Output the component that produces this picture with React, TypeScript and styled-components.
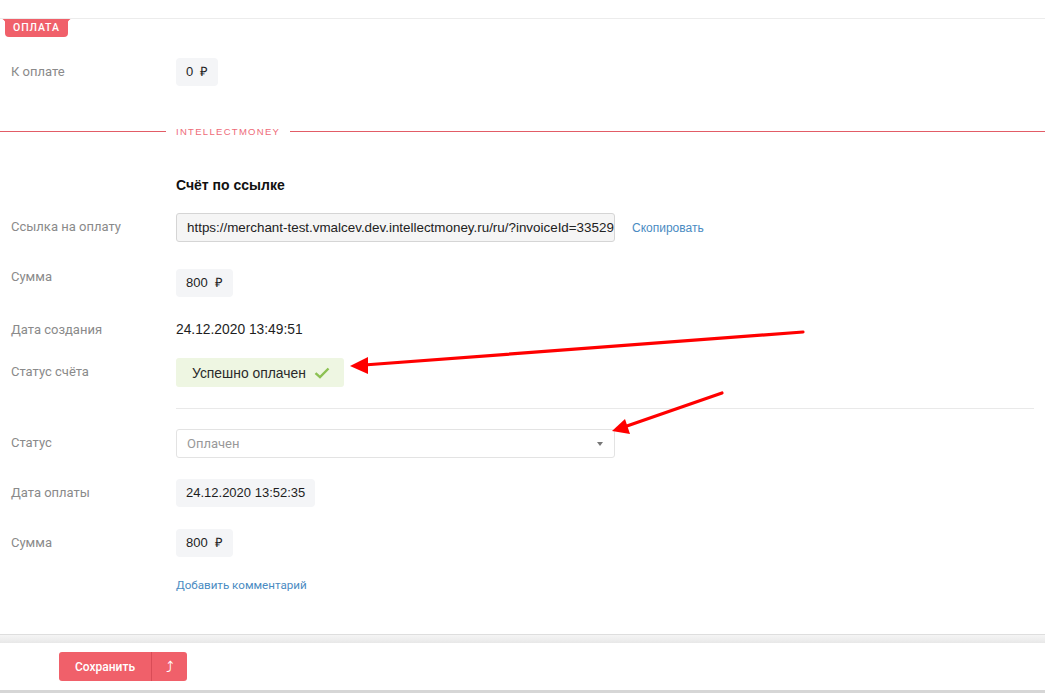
import styled, { createGlobalStyle } from "styled-components";

const GlobalStyle = createGlobalStyle`
  html, body {
    margin: 0;
    padding: 0;
    background: #fff;
  }
  body {
    font-family: "Liberation Sans", Arial, sans-serif;
    color: #222;
  }
`;

type Row = { label: string; top: number; tight?: boolean; content: React.ReactNode };

const invoiceUrl = "https://merchant-test.vmalcev.dev.intellectmoney.ru/ru/?invoiceId=3352911";

export default function App() {
  const invoiceRows: Row[] = [
    {
      label: "Ссылка на оплату",
      top: 18,
      content: (
        <LinkLine>
          <LinkInput readOnly value={invoiceUrl} />
          <Action>Скопировать</Action>
        </LinkLine>
      ),
    },
    { label: "Сумма", top: 27, tight: true, content: <Chip>800 &nbsp;₽</Chip> },
    { label: "Дата создания", top: 19, content: <PlainValue>24.12.2020 13:49:51</PlainValue> },
    {
      label: "Статус счёта",
      top: 14,
      content: (
        <StatusChip>
          Успешно оплачен
          <svg width="16" height="12" viewBox="0 0 16 12">
            <path d="M1.5 6.2 L6 10.2 L14.5 1.5" fill="none" stroke="#8cc152" strokeWidth="2.4" />
          </svg>
        </StatusChip>
      ),
    },
  ];

  const paymentRows: Row[] = [
    {
      label: "Статус",
      top: 20,
      content: (
        <Select>
          <span>Оплачен</span>
          <Caret />
        </Select>
      ),
    },
    { label: "Дата оплаты", top: 21, content: <Chip>24.12.2020 13:52:35</Chip> },
    { label: "Сумма", top: 22, content: <Chip>800 &nbsp;₽</Chip> },
  ];

  return (
    <Page>
      <GlobalStyle />
      <Content>
        <TopBar />
        <Badge>ОПЛАТА</Badge>
        <Field $top={21}>
          <Label>К оплате</Label>
          <Chip>0 &nbsp;₽</Chip>
        </Field>
        <Divider>
          <span>INTELLECTMONEY</span>
        </Divider>
        <SectionTitle>Счёт по ссылке</SectionTitle>
        {invoiceRows.map((r, i) => (
          <Field key={i} $top={r.top}>
            <Label $tight={r.tight}>{r.label}</Label>
            {r.content}
          </Field>
        ))}
        <Separator />
        {paymentRows.map((r, i) => (
          <Field key={i} $top={r.top}>
            <Label>{r.label}</Label>
            {r.content}
          </Field>
        ))}
        <CommentLink>Добавить комментарий</CommentLink>
      </Content>
      <FooterShade />
      <Footer>
        <SaveGroup>
          <SaveButton>Сохранить</SaveButton>
          <ArrowButton>⤴</ArrowButton>
        </SaveGroup>
      </Footer>
      <Annotations width="1045" height="693" viewBox="0 0 1045 693">
        <line x1="803" y1="332" x2="364" y2="365" stroke="#ff0000" strokeWidth="3.2" strokeLinecap="round" />
        <polygon points="350,366 368,357 368,374" fill="#ff0000" />
        <line x1="722" y1="393" x2="624" y2="427" stroke="#ff0000" strokeWidth="3.2" strokeLinecap="round" />
        <polygon points="612,431 625,419 630,434" fill="#ff0000" />
      </Annotations>
    </Page>
  );
}

const Page = styled.div`
  position: relative;
  height: 100vh;
  display: flex;
  flex-direction: column;
  overflow: hidden;
`;

const Content = styled.div`
  flex: 1;
  display: flex;
  flex-direction: column;
`;

const TopBar = styled.div`
  height: 18px;
  border-bottom: 1px solid #ececec;
`;

const Badge = styled.div`
  position: relative;
  align-self: flex-start;
  margin-left: 5px;
  height: 18px;
  padding: 0 8px;
  background: #f0606a;
  color: #fff;
  font-family: Roboto, sans-serif;
  font-size: 10.5px;
  font-weight: 500;
  letter-spacing: 0.9px;
  line-height: 18px;
  border-radius: 0 0 4px 4px;
  &::before,
  &::after {
    content: "";
    position: absolute;
    top: 0;
    width: 3px;
    height: 3px;
    background: radial-gradient(circle at var(--cx) 100%, transparent 2.5px, #f0606a 3px);
  }
  &::before {
    left: -3px;
    --cx: 0%;
  }
  &::after {
    right: -3px;
    --cx: 100%;
  }
`;

const Field = styled.div<{ $top: number }>`
  margin-top: ${(p) => p.$top}px;
  display: grid;
  grid-template-columns: 176px 1fr;
  align-items: start;
`;

const Label = styled.div<{ $tight?: boolean }>`
  padding-left: 11px;
  font-family: Roboto, sans-serif;
  font-size: 13px;
  color: #8a8a8a;
  line-height: ${(p) => (p.$tight ? "16px" : "28px")};
`;

const Chip = styled.div`
  justify-self: start;
  height: 28px;
  padding: 0 10px;
  border-radius: 4px;
  background: #f4f5f7;
  font-size: 13px;
  line-height: 28px;
  color: #1e1e1e;
`;

const PlainValue = styled.div`
  font-size: 13.8px;
  line-height: 28px;
  color: #1e1e1e;
`;

const StatusChip = styled.div`
  justify-self: start;
  height: 29px;
  width: 168px;
  box-sizing: border-box;
  padding: 0 14px 0 16px;
  display: flex;
  align-items: center;
  justify-content: space-between;
  border-radius: 3px;
  background: #eef6e2;
  font-size: 13.9px;
  color: #2a2a2a;
`;

const LinkLine = styled.div`
  display: flex;
  align-items: center;
  gap: 17px;
`;

const LinkInput = styled.input`
  width: 439px;
  height: 29px;
  box-sizing: border-box;
  margin: 0;
  padding: 0 0 0 10px;
  border: 1px solid #d5d5d5;
  border-radius: 3px;
  background: #f5f5f5;
  font-family: "Liberation Sans", Arial, sans-serif;
  font-size: 13.4px;
  color: #222;
  outline: none;
`;

const Action = styled.span`
  font-size: 12px;
  color: #4a8bc2;
`;

const Divider = styled.div`
  margin-top: 38px;
  height: 14px;
  display: flex;
  align-items: center;
  gap: 10px;
  font-family: "Liberation Sans", Arial, sans-serif;
  font-size: 9.5px;
  letter-spacing: 1.3px;
  color: #ee6b78;
  &::before,
  &::after {
    content: "";
    height: 1px;
    background: #e25c66;
  }
  &::before {
    width: 166px;
  }
  &::after {
    flex: 1;
  }
`;

const SectionTitle = styled.div`
  margin-top: 37px;
  padding-left: 176px;
  font-size: 14px;
  font-weight: 700;
  line-height: 20px;
  color: #111;
`;

const Separator = styled.div`
  margin: 21px 11px 0 176px;
  height: 1px;
  background: #e9e9e9;
`;

const Select = styled.div`
  width: 439px;
  height: 29px;
  box-sizing: border-box;
  padding: 0 10px;
  display: flex;
  align-items: center;
  justify-content: space-between;
  border: 1px solid #e3e3e3;
  border-radius: 3px;
  font-family: Roboto, sans-serif;
  font-size: 13px;
  color: #999;
`;

const Caret = styled.span`
  width: 0;
  height: 0;
  margin-right: 1px;
  border-left: 3.5px solid transparent;
  border-right: 3.5px solid transparent;
  border-top: 4px solid #777;
`;

const CommentLink = styled.div`
  margin-top: 20px;
  padding-left: 176px;
  font-family: Roboto, sans-serif;
  font-size: 11.6px;
  line-height: 16px;
  color: #4a8bc2;
`;

const FooterShade = styled.div`
  flex-shrink: 0;
  height: 8px;
  border-top: 1px solid #dedede;
  background: linear-gradient(#f5f5f5, #e8e8e8);
`;

const Footer = styled.div`
  flex-shrink: 0;
  height: 38px;
  padding: 9px 0 0 59px;
  border-bottom: 3px solid #d6d6d6;
  background: #fff;
  display: flex;
  align-items: flex-start;
`;

const SaveGroup = styled.div`
  display: flex;
  height: 29px;
  border-radius: 3px;
  overflow: hidden;
  background: #f0606a;
`;

const SaveButton = styled.div`
  width: 92px;
  display: flex;
  align-items: center;
  justify-content: center;
  font-family: Roboto, sans-serif;
  font-size: 12px;
  font-weight: 500;
  color: #fff;
  border-right: 1px solid #d94c57;
`;

const ArrowButton = styled.div`
  width: 35px;
  display: flex;
  align-items: center;
  justify-content: center;
  font-family: "DejaVu Sans", sans-serif;
  font-size: 15px;
  color: #fff;
`;

const Annotations = styled.svg`
  position: absolute;
  left: 0;
  top: 0;
  pointer-events: none;
`;
